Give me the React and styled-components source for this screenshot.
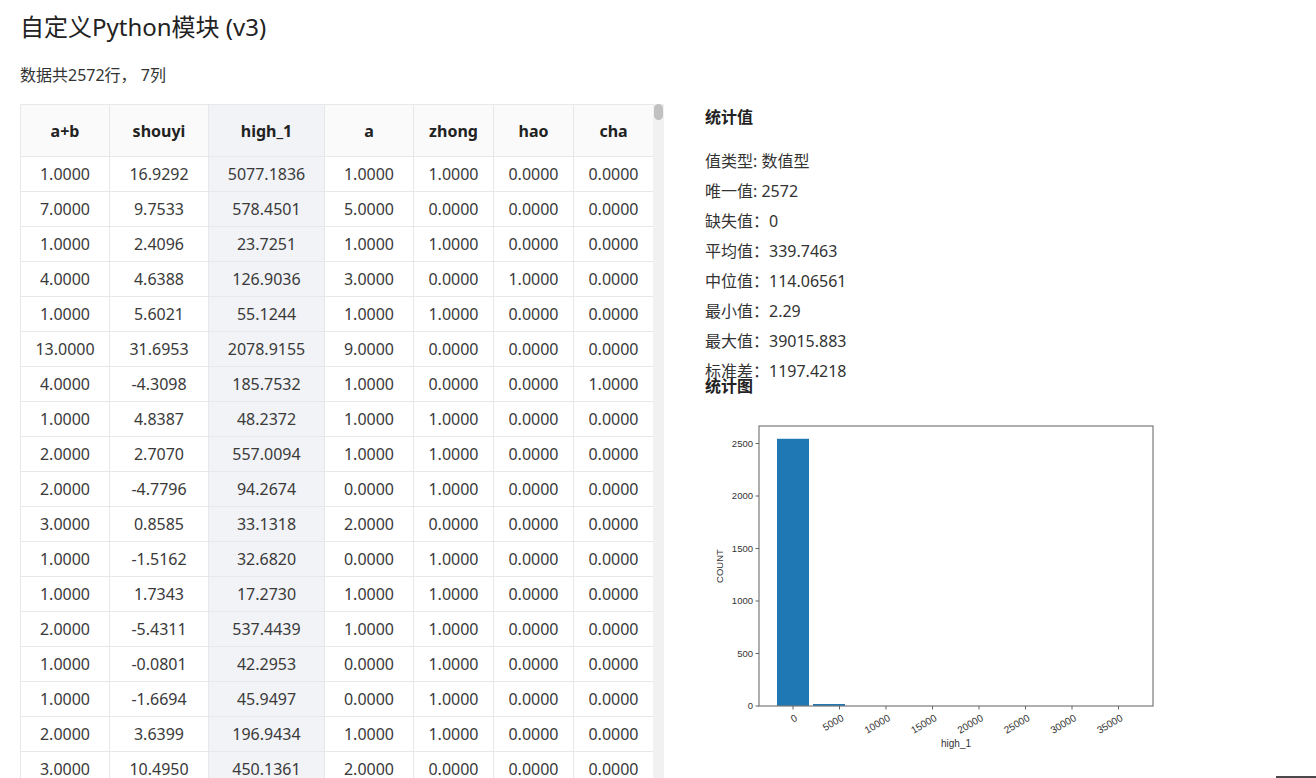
import React from "react";
import styled, { createGlobalStyle } from "styled-components";

const GlobalStyle = createGlobalStyle`
  html, body {
    margin: 0;
    height: 100%;
    overflow: hidden;
    background: #fff;
  }
  body {
    font-family: "Noto Sans", "Noto Sans CJK SC", sans-serif;
    color: #333;
  }
`;

const Page = styled.div`
  padding: 12px 20px 0;
`;

const Title = styled.h1`
  margin: 0;
  font-size: 24px;
  font-weight: 400;
  line-height: 30px;
  color: #222;
`;

const Summary = styled.div`
  margin-top: 23px;
  font-size: 16px;
  line-height: 20px;
  color: #333;
`;

const Main = styled.div`
  display: flex;
  align-items: flex-start;
  gap: 41px;
  margin-top: 19px;
`;

const TableFrame = styled.div`
  display: flex;
  height: 674px;
`;

/* scrollable table area, native bar hidden */
const TableScroll = styled.div`
  width: 633px;
  height: 100%;
  overflow-y: auto;
  overflow-x: hidden;
  scrollbar-width: none;

  &::-webkit-scrollbar {
    display: none;
  }
`;

const ScrollTrack = styled.div`
  width: 11px;
  height: 100%;
  background: #f1f1f1;
  padding: 0 1px;
  box-sizing: border-box;
`;

const ScrollThumb = styled.div`
  height: 16px;
  border-radius: 5px;
  background: #c1c1c1;
`;

const Table = styled.table`
  width: 633px;
  border-collapse: collapse;
  table-layout: fixed;
  font-size: 16px;
`;

const HeadCell = styled.th`
  position: sticky;
  top: 0;
  z-index: 1;
  height: 51px;
  padding: 0;
  border: 1px solid #e8e8e8;
  background: ${(p) => (p.$active ? "#f2f3f7" : "#fafafa")};
  color: #222;
  font-weight: 700;
  text-align: center;
`;

const Cell = styled.td`
  height: 34px;
  padding: 0;
  border: 1px solid #e8e8e8;
  background: ${(p) => (p.$active ? "#f2f3f7" : "#fff")};
  color: #3a3a3a;
  text-align: center;
  white-space: nowrap;
`;

const Side = styled.div`
  display: flex;
  flex-direction: column;
  width: 470px;
`;

const SectionTitle = styled.h3`
  margin: 0;
  font-size: 16px;
  font-weight: 700;
  line-height: 26px;
  color: #222;
`;

const StatList = styled.div`
  margin-top: 16px;
  height: 229px;
  font-size: 16px;
  line-height: 30px;
  color: #333;
`;

const StatLine = styled.div`
  white-space: nowrap;
`;

const ChartTitle = styled(SectionTitle)`
  line-height: 22px;
`;

const ChartBox = styled.div`
  margin-top: 13px;
  width: 460px;
  height: 360px;
`;

const CornerBar = styled.div`
  position: fixed;
  right: 0;
  bottom: 0;
  width: 40px;
  height: 2px;
  background: #4a4a4a;
`;

const columns = ["a+b", "shouyi", "high_1", "a", "zhong", "hao", "cha"];
const widths = [89, 99, 116, 89, 80, 80, 80];
const activeCol = 2;

const firstRows = [
  [1, 16.9292, 5077.1836, 1, 1, 0, 0],
  [7, 9.7533, 578.4501, 5, 0, 0, 0],
  [1, 2.4096, 23.7251, 1, 1, 0, 0],
  [4, 4.6388, 126.9036, 3, 0, 1, 0],
  [1, 5.6021, 55.1244, 1, 1, 0, 0],
  [13, 31.6953, 2078.9155, 9, 0, 0, 0],
  [4, -4.3098, 185.7532, 1, 0, 0, 1],
  [1, 4.8387, 48.2372, 1, 1, 0, 0],
  [2, 2.707, 557.0094, 1, 1, 0, 0],
  [2, -4.7796, 94.2674, 0, 1, 0, 0],
  [3, 0.8585, 33.1318, 2, 0, 0, 0],
  [1, -1.5162, 32.682, 0, 1, 0, 0],
  [1, 1.7343, 17.273, 1, 1, 0, 0],
  [2, -5.4311, 537.4439, 1, 1, 0, 0],
  [1, -0.0801, 42.2953, 0, 1, 0, 0],
  [1, -1.6694, 45.9497, 0, 1, 0, 0],
  [2, 3.6399, 196.9434, 1, 1, 0, 0],
  [3, 10.495, 450.1361, 2, 0, 0, 0],
];

// fill the rest of the page with repeatable pseudo data
function buildRows(count) {
  const rows = [...firstRows];
  let seed = 7;
  const rnd = () => {
    seed = (seed * 16807) % 2147483647;
    return seed / 2147483647;
  };
  while (rows.length < count) {
    const ab = 1 + Math.floor(rnd() * 4);
    const a = Math.floor(rnd() * ab);
    rows.push([
      ab,
      (rnd() - 0.4) * 20,
      rnd() * 600 + 10,
      a,
      rnd() > 0.5 ? 1 : 0,
      rnd() > 0.9 ? 1 : 0,
      rnd() > 0.95 ? 1 : 0,
    ]);
  }
  return rows;
}

const rows = buildRows(60);

const stats = [
  "值类型: 数值型",
  "唯一值: 2572",
  "缺失值：0",
  "平均值：339.7463",
  "中位值：114.06561",
  "最小值：2.29",
  "最大值：39015.883",
  "标准差：1197.4218",
];

const Histogram = () => {
  const left = 54;
  const right = 448;
  const top = 16;
  const bottom = 296;
  const yOf = (v) => bottom - v * 0.105;
  const xOf = (v) => 88 + v * (46.5 / 5000);
  const yTicks = [0, 500, 1000, 1500, 2000, 2500];
  const xTicks = [0, 5000, 10000, 15000, 20000, 25000, 30000, 35000];
  const font = '"Liberation Sans", Arial, sans-serif';

  return (
    <svg width="460" height="360" viewBox="0 0 460 360">
      <rect x="72" y={yOf(2545)} width="32" height={bottom - yOf(2545)} fill="#1f77b4" />
      <rect x="108" y={bottom - 2} width="32" height="2" fill="#1f77b4" />
      <rect
        x={left}
        y={top}
        width={right - left}
        height={bottom - top}
        fill="none"
        stroke="#7a7a7a"
        strokeWidth="1.2"
      />
      {yTicks.map((v) => (
        <g key={v}>
          <line x1={left - 3.5} x2={left} y1={yOf(v)} y2={yOf(v)} stroke="#555" strokeWidth="0.9" />
          <text
            x={left - 6}
            y={yOf(v) + 3.3}
            textAnchor="end"
            fontFamily={font}
            fontSize="9.5"
            fill="#333"
          >
            {v}
          </text>
        </g>
      ))}
      {xTicks.map((v) => (
        <g key={v}>
          <line x1={xOf(v)} x2={xOf(v)} y1={bottom} y2={bottom + 3.5} stroke="#555" strokeWidth="0.9" />
          <text
            x={xOf(v) + 5}
            y={bottom + 14}
            textAnchor="end"
            transform={`rotate(-30 ${xOf(v) + 5} ${bottom + 14})`}
            fontFamily={font}
            fontSize="10"
            fill="#333"
          >
            {v}
          </text>
        </g>
      ))}
      <text
        x="18"
        y="156"
        textAnchor="middle"
        transform="rotate(-90 18 156)"
        fontFamily={font}
        fontSize="9.5"
        fill="#333"
      >
        COUNT
      </text>
      <text x="251" y="337" textAnchor="middle" fontFamily={font} fontSize="10" fill="#333">
        high_1
      </text>
    </svg>
  );
};

const App = () => (
  <Page>
    <GlobalStyle />
    <Title>自定义Python模块 (v3)</Title>
    <Summary>数据共2572行， 7列</Summary>
    <Main>
      <TableFrame>
        <TableScroll>
          <Table>
            <colgroup>
              {widths.map((w, i) => (
                <col key={i} style={{ width: w }} />
              ))}
            </colgroup>
            <thead>
              <tr>
                {columns.map((c, i) => (
                  <HeadCell key={c} $active={i === activeCol}>
                    {c}
                  </HeadCell>
                ))}
              </tr>
            </thead>
            <tbody>
              {rows.map((r, ri) => (
                <tr key={ri}>
                  {r.map((v, ci) => (
                    <Cell key={ci} $active={ci === activeCol}>
                      {v.toFixed(4)}
                    </Cell>
                  ))}
                </tr>
              ))}
            </tbody>
          </Table>
        </TableScroll>
        <ScrollTrack>
          <ScrollThumb />
        </ScrollTrack>
      </TableFrame>
      <Side>
        <SectionTitle>统计值</SectionTitle>
        <StatList>
          {stats.map((s) => (
            <StatLine key={s}>{s}</StatLine>
          ))}
        </StatList>
        <ChartTitle>统计图</ChartTitle>
        <ChartBox>
          <Histogram />
        </ChartBox>
      </Side>
    </Main>
    <CornerBar />
  </Page>
);

export default App;
